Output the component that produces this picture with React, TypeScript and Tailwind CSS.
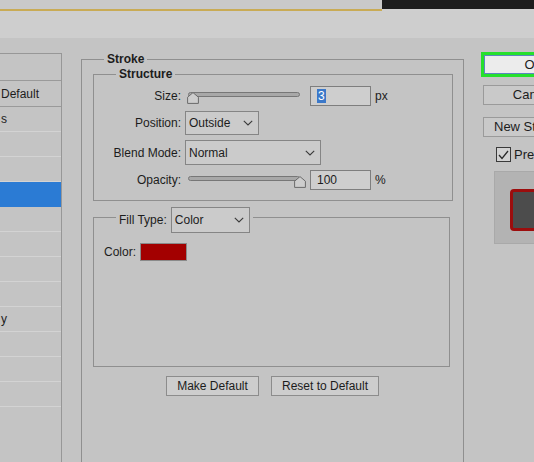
import type { ReactNode } from "react";

interface StyleRow {
  label?: string;
  tone: "dark" | "light" | "selected";
  height: string;
}

const STYLE_ROWS: StyleRow[] = [
  { tone: "dark", height: "h-[27px]" },
  { label: "Default", tone: "dark", height: "h-[26px]" },
  { label: "s", tone: "light", height: "h-[25px]" },
  { tone: "light", height: "h-[25px]" },
  { tone: "light", height: "h-[25px]" },
  { tone: "selected", height: "h-[25px]" },
  { tone: "light", height: "h-[25px]" },
  { tone: "light", height: "h-[25px]" },
  { tone: "light", height: "h-[25px]" },
  { tone: "light", height: "h-[25px]" },
  { label: "y", tone: "light", height: "h-[25px]" },
  { tone: "light", height: "h-[25px]" },
  { tone: "light", height: "h-[25px]" },
  { tone: "light", height: "h-[25px]" },
];

function StyleList(): JSX.Element {
  return (
    <div className="mt-[15px] flex w-[62px] shrink-0 flex-col border-r border-t border-[#979797]">
      {STYLE_ROWS.map((row, index) => (
        <div
          key={index}
          className={
            row.tone === "selected"
              ? `${row.height} bg-[#2b7bd4]`
              : row.tone === "dark"
                ? `${row.height} flex items-center border-b border-[#9a9a9a] pl-[1px]`
                : `${row.height} flex items-center border-b border-[#d3d3d3] pl-[1px]`
          }
        >
          {row.label}
        </div>
      ))}
    </div>
  );
}

function Chevron(): JSX.Element {
  return (
    <svg width="10" height="6" viewBox="0 0 10 6" className="shrink-0">
      <path d="M0.8 0.8 L5 5 L9.2 0.8" fill="none" stroke="#3a3a3a" strokeWidth="1.1" />
    </svg>
  );
}

function Select({ value, width, height }: { value: string; width: string; height: string }): JSX.Element {
  return (
    <div
      className={`${width} ${height} flex shrink-0 items-center justify-between border border-[#858585] bg-[#cbcbcb] pl-[3px] pr-[5px]`}
    >
      <span>{value}</span>
      <Chevron />
    </div>
  );
}

function Slider({ percent }: { percent: number }): JSX.Element {
  return (
    <div className="relative h-[20px] w-[121px] shrink-0">
      <div className="absolute left-[3px] right-[6px] top-[6px] h-[5px] rounded-full border border-[#777777] bg-[#a8a8a8]" />
      <svg
        width="12"
        height="12"
        viewBox="0 0 12 12"
        className="absolute top-[6px]"
        style={{ left: `${1 + percent * 1.08}px` }}
      >
        <path d="M6 0.6 L11.4 5.2 V11.4 H0.6 V5.2 Z" fill="#cdcdcd" stroke="#6a6a6a" strokeWidth="1" />
      </svg>
    </div>
  );
}

function NumberBox({ children }: { children: ReactNode }): JSX.Element {
  return (
    <div className="flex h-[20px] w-[61px] shrink-0 items-center border border-[#7e7e7e] bg-[#cecece] pl-[6px]">
      {children}
    </div>
  );
}

function Row({ label, children, className }: { label: string; children: ReactNode; className: string }): JSX.Element {
  return (
    <div className={`flex items-center gap-[4px] ${className}`}>
      <span className="w-[87px] shrink-0 text-right">{label}</span>
      {children}
    </div>
  );
}

function StrokePanel(): JSX.Element {
  return (
    <fieldset className="ml-[19px] mt-[14px] h-[430px] w-[383px] shrink-0 border border-[#8f8f8f]">
      <legend className="ml-[22px] px-[3px] font-bold leading-[14px]">Stroke</legend>

      <fieldset className="ml-[11px] mt-[1px] w-[360px] border border-[#8f8f8f] pb-[10px]">
        <legend className="ml-[22px] px-[3px] font-bold leading-[14px]">Structure</legend>

        <Row label="Size:" className="mt-[5px] h-[20px]">
          <Slider percent={1} />
          <NumberBox>
            <span className="bg-[#3b78c9] px-[1px] leading-[14px] text-white">3</span>
          </NumberBox>
          <span>px</span>
        </Row>

        <Row label="Position:" className="mt-[5px] h-[24px]">
          <Select value="Outside" width="w-[74px]" height="h-[24px]" />
        </Row>

        <Row label="Blend Mode:" className="mt-[5px] h-[25px]">
          <Select value="Normal" width="w-[136px]" height="h-[25px]" />
        </Row>

        <Row label="Opacity:" className="mt-[5px] h-[20px]">
          <Slider percent={100} />
          <NumberBox>100</NumberBox>
          <span>%</span>
        </Row>
      </fieldset>

      <fieldset className="ml-[11px] mt-[6px] h-[160px] w-[357px] border border-[#8f8f8f]">
        <legend className="ml-[22px] flex h-[20px] items-start gap-[4px] px-[3px]">
          <span className="flex h-[26px] items-center">Fill Type:</span>
          <Select value="Color" width="w-[79px]" height="h-[26px]" />
        </legend>

        <div className="mt-[16px] flex items-center gap-[4px] pl-[10px]">
          <span>Color:</span>
          <div className="h-[18px] w-[47px] border border-[#8a8a8a] bg-[#a30000]" />
        </div>
      </fieldset>

      <div className="ml-[84px] mt-[9px] flex gap-[12px]">
        <button
          type="button"
          className="h-[20px] w-[93px] border border-[#8c8c8c] bg-[#cdcdcd] leading-[18px]"
        >
          Make Default
        </button>
        <button
          type="button"
          className="h-[20px] w-[108px] border border-[#8c8c8c] bg-[#cdcdcd] leading-[18px]"
        >
          Reset to Default
        </button>
      </div>
    </fieldset>
  );
}

function ActionColumn(): JSX.Element {
  return (
    <div className="ml-[17px] mt-[14px] flex w-[106px] shrink-0 flex-col text-[13px]">
      <div className="h-[25px] w-[106px] border-[3px] border-[#25e02c]">
        <div className="flex h-full items-center justify-center border border-[#5b86bd] bg-[#ececec]">OK</div>
      </div>

      <button
        type="button"
        className="ml-[2px] mt-[8px] h-[20px] w-[100px] border border-[#9a9a9a] bg-[#c9c9c9] leading-[18px]"
      >
        Cancel
      </button>

      <button
        type="button"
        className="ml-[2px] mt-[12px] h-[20px] w-[100px] whitespace-nowrap border border-[#9a9a9a] bg-[#c9c9c9] pl-[10px] text-left leading-[18px]"
      >
        New Style...
      </button>

      <div className="ml-[15px] mt-[10px] flex h-[15px] items-center gap-[3px]">
        <div className="flex h-[15px] w-[15px] shrink-0 items-center justify-center border border-[#3a3a3a] bg-[#d2d2d2]">
          <svg width="11" height="10" viewBox="0 0 11 10">
            <path d="M1 5 L4 8.5 L10 1" fill="none" stroke="#2a2a2a" strokeWidth="1.3" />
          </svg>
        </div>
        <span>Preview</span>
      </div>

      <div className="ml-[13px] mt-[9px] h-[73px] w-[100px] shrink-0 border border-[#a9a9a9] bg-[#b3b3b3] pl-[15px] pt-[17px]">
        <div className="h-[42px] w-[60px] rounded-[4px] border-[3px] border-[#9c0d0d] bg-[#4c4c4c]" />
      </div>
    </div>
  );
}

export default function App(): JSX.Element {
  return (
    <div className="flex h-[462px] w-[534px] flex-col overflow-hidden bg-[#c4c4c4] font-['Liberation_Sans',Arial,sans-serif] text-[12px] text-[#1c1c1c]">
      <div className="flex h-[9px] shrink-0">
        <div className="flex-1 bg-[#c9c9c9]" />
        <div className="w-[152px] bg-[#1d1d1d]" />
      </div>
      <div className="flex h-[2px] shrink-0">
        <div className="w-[382px] bg-[#c9ab55]" />
        <div className="flex-1 bg-[#cfcfcf]" />
      </div>
      <div className="h-[27px] shrink-0 bg-[#cecece]" />

      <div className="flex min-h-0 flex-1">
        <StyleList />
        <StrokePanel />
        <ActionColumn />
      </div>
    </div>
  );
}
